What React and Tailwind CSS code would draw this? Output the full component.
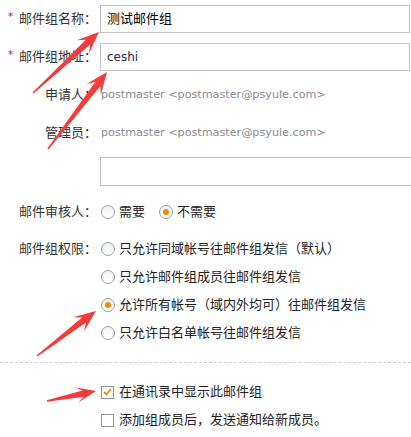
import React from "react";

const cn = { fontFamily: '"DejaVu Sans", "Noto Sans CJK SC", sans-serif' };

function arrowPoints(tx, ty, px, py, h = 22, w = 9, s0 = 0.8, s1 = 3.2) {
  const dx = px - tx, dy = py - ty;
  const L = Math.hypot(dx, dy);
  const ux = dx / L, uy = dy / L;
  const nx = -uy, ny = ux;
  const bx = px - ux * (h - 7), by = py - uy * (h - 7);
  const hx = px - ux * h, hy = py - uy * h;
  const pts = [
    [tx + nx * s0, ty + ny * s0],
    [bx + nx * s1, by + ny * s1],
    [hx + nx * w, hy + ny * w],
    [px, py],
    [hx - nx * w, hy - ny * w],
    [bx - nx * s1, by - ny * s1],
    [tx - nx * s0, ty - ny * s0],
  ];
  return pts.map((p) => p[0].toFixed(1) + "," + p[1].toFixed(1)).join(" ");
}

function Radio({ checked }) {
  return (
    <span className="w-[14px] h-[14px] rounded-full border border-[#9aa0a8] bg-gradient-to-b from-[#eef0f2] to-white flex items-center justify-center shrink-0">
      {checked && <span className="w-[6px] h-[6px] rounded-full bg-[#f58a00]" />}
    </span>
  );
}

function Checkbox({ checked }) {
  return (
    <span className="w-[13px] h-[13px] border border-[#8f959c] bg-white flex items-center justify-center shrink-0">
      {checked && (
        <svg width="9" height="8" viewBox="0 0 9 8">
          <path d="M1 4 L3.5 6.5 L8 1" stroke="#f08a00" strokeWidth="1.8" fill="none" />
        </svg>
      )}
    </span>
  );
}

function Label({ children, req }) {
  return (
    <div className="w-[97px] shrink-0 flex items-center justify-end text-[13px] text-[#333]">
      {req && <span className="mr-auto ml-[8px] text-[10px] text-[#a0206a] leading-none -mt-[4px]">*</span>}
      <span>{children}</span>
    </div>
  );
}

export default function App() {
  return (
    <div className="relative w-[411px] h-[437px] bg-white overflow-hidden" style={cn}>
      <div className="flex flex-col pt-[5px]">
        <div className="flex h-[28px]">
          <Label req>邮件组名称：</Label>
          <div className="ml-[3px] w-[310px] shrink-0 h-[28px] border border-[#c3c3c3] flex items-center pl-[6px] text-[13px] text-black">
            测试邮件组
          </div>
        </div>
        <div className="flex h-[28px] mt-[10px]">
          <Label req>邮件组地址：</Label>
          <div className="ml-[3px] w-[310px] shrink-0 h-[28px] border border-[#c3c3c3] flex items-center pl-[6px] text-[12px] text-[#2a2a3a]">
            ceshi
          </div>
        </div>
        <div className="flex h-[28px] mt-[10px] items-center">
          <Label>申请人：</Label>
          <span className="ml-[4px] text-[11.2px] text-[#8a8d94]">postmaster &lt;postmaster@psyule.com&gt;</span>
        </div>
        <div className="flex h-[28px] mt-[10px] items-center">
          <Label>管理员：</Label>
          <span className="ml-[4px] text-[11.2px] text-[#8a8d94]">postmaster &lt;postmaster@psyule.com&gt;</span>
        </div>
        <div className="flex h-[29px] mt-[10px]">
          <div className="w-[97px] shrink-0" />
          <div className="ml-[3px] w-[320px] shrink-0 h-[29px] border border-[#c3c3c3]" />
        </div>
        <div className="flex h-[28px] mt-[12px] items-center">
          <Label>邮件审核人：</Label>
          <div className="ml-[4px] flex items-center gap-[4px] text-[13px] text-[#222]">
            <Radio />
            <span>需要</span>
          </div>
          <div className="ml-[14px] flex items-center gap-[4px] text-[13px] text-[#222]">
            <Radio checked />
            <span>不需要</span>
          </div>
        </div>
        <div className="flex mt-[9px]">
          <div className="w-[97px] shrink-0 h-[28px] flex items-center justify-end text-[13px] text-[#333]">邮件组权限：</div>
          <div className="ml-[4px] flex flex-col text-[13px] text-[#222]">
            <div className="h-[28px] flex items-center gap-[4px]"><Radio /><span>只允许同域帐号往邮件组发信（默认）</span></div>
            <div className="h-[28px] flex items-center gap-[4px]"><Radio /><span>只允许邮件组成员往邮件组发信</span></div>
            <div className="h-[28px] flex items-center gap-[4px]"><Radio checked /><span>允许所有帐号（域内外均可）往邮件组发信</span></div>
            <div className="h-[28px] flex items-center gap-[4px]"><Radio /><span>只允许白名单帐号往邮件组发信</span></div>
          </div>
        </div>
        <div className="mt-[15px] border-t border-dashed border-[#cfcfcf]" />
        <div className="flex flex-col mt-[15px] pl-[101px] text-[13px] text-[#222]">
          <div className="h-[28px] flex items-center gap-[5px]"><Checkbox checked /><span>在通讯录中显示此邮件组</span></div>
          <div className="h-[28px] flex items-center gap-[5px]"><Checkbox /><span>添加组成员后，发送通知给新成员。</span></div>
        </div>
      </div>
      <svg className="absolute inset-0 pointer-events-none" width="411" height="437">
        <polygon points={arrowPoints(33, 93, 99, 32)} fill="#f63b3b" />
        <polygon points={arrowPoints(48, 149, 107, 72)} fill="#f63b3b" />
        <polygon points={arrowPoints(37, 356, 96, 311)} fill="#f63b3b" />
        <polygon points={arrowPoints(47, 401, 96, 391, 20, 8)} fill="#f63b3b" />
      </svg>
    </div>
  );
}
